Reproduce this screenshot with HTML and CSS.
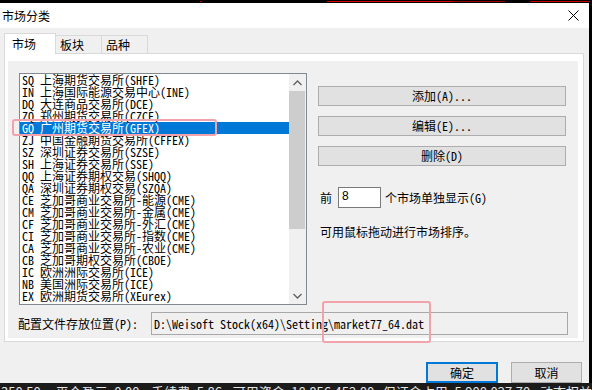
FILE: index.html
```html
<!DOCTYPE html>
<html lang="zh-CN">

<head>
    <meta charset="UTF-8">
    <title>市场分类</title>
    <link rel="stylesheet" href="styles.css">
</head>

<body>
    <div class="topstrip"><div class="redline"></div></div>
    <div class="screen">
        <div class="dialog">
            <div class="titlebar">
                <span class="title">市场分类</span>
                <svg class="close" width="11" height="11" viewBox="0 0 11 11">
                    <path d="M0.5 0.5 L10.5 10.5 M10.5 0.5 L0.5 10.5" stroke="#000" stroke-width="1" fill="none" />
                </svg>
            </div>
            <div class="dlgbody">
                <div class="tabs">
                    <div class="tab active">市场</div>
                    <div class="tab">板块</div>
                    <div class="tab">品种</div>
                </div>
                <div class="panel">
                    <div class="page">
                        <div class="main">
                            <div class="listbox">
                                <ul class="items">
                                    <li>SQ 上海期货交易所(SHFE)</li>
                                    <li>IN 上海国际能源交易中心(INE)</li>
                                    <li>DQ 大连商品交易所(DCE)</li>
                                    <li>ZQ 郑州期货交易所(CZCE)</li>
                                    <li class="selected">GQ 广州期货交易所(GFEX)</li>
                                    <li>ZJ 中国金融期货交易所(CFFEX)</li>
                                    <li>SZ 深圳证券交易所(SZSE)</li>
                                    <li>SH 上海证券交易所(SSE)</li>
                                    <li>QQ 上海证券期权交易(SHQQ)</li>
                                    <li>QA 深圳证券期权交易(SZQA)</li>
                                    <li>CE 芝加哥商业交易所-能源(CME)</li>
                                    <li>CM 芝加哥商业交易所-金属(CME)</li>
                                    <li>CF 芝加哥商业交易所-外汇(CME)</li>
                                    <li>CI 芝加哥商业交易所-指数(CME)</li>
                                    <li>CA 芝加哥商业交易所-农业(CME)</li>
                                    <li>CB 芝加哥期权交易所(CBOE)</li>
                                    <li>IC 欧洲洲际交易所(ICE)</li>
                                    <li>NB 美国洲际交易所(ICE)</li>
                                    <li>EX 欧洲期货交易所(XEurex)</li>
                                </ul>
                                <div class="vscroll">
                                    <div class="sbtn">
                                        <svg width="9" height="6" viewBox="0 0 9 6"><path d="M0.5 5 L4.5 1 L8.5 5" stroke="#606060" stroke-width="1.3" fill="none" /></svg>
                                    </div>
                                    <div class="track"><div class="thumb"></div></div>
                                    <div class="sbtn">
                                        <svg width="9" height="6" viewBox="0 0 9 6"><path d="M0.5 1 L4.5 5 L8.5 1" stroke="#606060" stroke-width="1.3" fill="none" /></svg>
                                    </div>
                                </div>
                            </div>
                            <div class="side">
                                <div class="btn">添加(A)...</div>
                                <div class="btn">编辑(E)...</div>
                                <div class="btn">删除(D)</div>
                                <div class="showrow">
                                    <span>前</span>
                                    <span class="num">8</span>
                                    <span>个市场单独显示(G)</span>
                                </div>
                                <div class="hint">可用鼠标拖动进行市场排序。</div>
                            </div>
                        </div>
                        <div class="pathrow">
                            <span class="pathlabel">配置文件存放位置(P):</span>
                            <span class="pathbox">D:\Weisoft Stock(x64)\Setting\market77_64.dat</span>
                        </div>
                    </div>
                </div>
                <div class="footer">
                    <div class="dbtn default">确定</div>
                    <div class="dbtn">取消</div>
                </div>
            </div>
        </div>
        <div class="edge"></div>
    </div>
    <div class="status">
        <span class="s1">350.50</span>
        <span class="s2">平仓盈亏: 0.00</span>
        <span class="s3">手续费: 5.86</span>
        <span class="s4">可用资金: 18,856,452.80</span>
        <span class="s5">保证金占用: 5,908,027.70</span>
        <span>动态权益</span>
    </div>

    <div class="mark mark-row"></div>
    <div class="mark mark-path"></div>
</body>

</html>
```

FILE: styles.css
```css
* {
    box-sizing: border-box;
}

body {
    margin: 0;
    width: 592px;
    height: 390px;
    overflow: hidden;
    position: relative;
    background: #000;
    font-family: "Noto Sans CJK SC", sans-serif;
    font-size: 12px;
    color: #000;
}

.topstrip {
    height: 3px;
    padding-top: 1px;
    background: #000;
}

.redline {
    height: 1px;
    background: linear-gradient(to right,
            transparent 200px, #d00000 200px, #d00000 202px, transparent 202px,
            transparent 327px, #e00000 327px, #e00000 453px, #900 453px, #900 505px, transparent 505px,
            transparent 530px, #c00 530px, #c00 590px, transparent 590px);
}

.screen {
    display: flex;
    height: 380px;
}

.dialog {
    width: 589px;
    background: #f0f0f0;
    display: flex;
    flex-direction: column;
}

.edge {
    flex: 1;
    background: #000;
}

/* title bar */
.titlebar {
    height: 25px;
    background: #fff;
    display: flex;
    align-items: center;
    justify-content: space-between;
    padding: 0 10px 0 2px;
}

.title {
    font-size: 12px;
    line-height: 14px;
}

.close {
    display: block;
}

.dlgbody {
    flex: 1;
    padding: 5px 5px 0 4px;
}

/* tabs */
.tabs {
    display: flex;
    align-items: flex-end;
    height: 20px;
}

.tab {
    width: 46px;
    height: 18px;
    border: 1px solid #d9d9d9;
    border-left: none;
    border-bottom: none;
    padding-left: 4px;
    font-size: 12px;
    line-height: 17px;
}

.tab.active {
    width: 52px;
    height: 21px;
    margin-bottom: -1px;
    border-left: 1px solid #d9d9d9;
    background: #fff;
    padding-left: 7px;
    line-height: 19px;
    position: relative;
    z-index: 1;
}

.panel {
    width: 580px;
    height: 289px;
    border: 1px solid #d9d9d9;
    background: #fff;
    padding: 7px 5px 3px 3px;
}

.page {
    height: 100%;
    background: #f0f0f0;
    font-family: "Noto Sans Mono CJK SC", "Noto Sans CJK SC", monospace;
}

.main {
    display: flex;
    padding: 12px 0 0 11px;
}

/* list box */
.listbox {
    width: 288px;
    height: 232px;
    border: 1px solid #828790;
    background: #fff;
    display: flex;
}

.items {
    flex: 1;
    list-style: none;
    margin: 0;
    padding: 0;
}

.items li {
    height: 12px;
    line-height: 12px;
    font-size: 12px;
    padding-left: 2px;
    white-space: nowrap;
}

.items li.selected {
    background: #0078d7;
    color: #fff;
}

.vscroll {
    width: 17px;
    background: #f0f0f0;
    display: flex;
    flex-direction: column;
}

.sbtn {
    height: 17px;
    display: flex;
    align-items: center;
    justify-content: center;
}

.track {
    flex: 1;
}

.thumb {
    height: 138px;
    margin-right: 1px;
    background: #cdcdcd;
}

/* right column */
.side {
    width: 248px;
    margin-left: 11px;
    padding-top: 13px;
}

.btn {
    height: 20px;
    margin-bottom: 10px;
    background: #e1e1e1;
    border: 1px solid #adadad;
    text-align: center;
    line-height: 18px;
}

.showrow {
    display: flex;
    align-items: center;
    height: 21px;
    margin-top: 21px;
    padding-left: 2px;
}

.num {
    width: 43px;
    height: 21px;
    margin: 0 4px 0 6px;
    background: #fff;
    border: 1px solid #7a7a7a;
    padding: 1px 0 0 3px;
    font-family: "Liberation Sans", sans-serif;
    font-size: 12px;
    line-height: 14px;
}

.hint {
    margin-top: 18px;
    padding-left: 2px;
    line-height: 12px;
}

/* path row */
.pathrow {
    display: flex;
    align-items: center;
    margin-top: 7px;
    padding-left: 10px;
}

.pathlabel {
    width: 133px;
    line-height: 12px;
}

.pathbox {
    width: 417px;
    height: 23px;
    border: 1px solid #a8a8a8;
    background: #f0f0f0;
    padding-left: 2px;
    line-height: 21px;
    white-space: nowrap;
}

/* dialog buttons */
.footer {
    display: flex;
    justify-content: flex-end;
    gap: 13px;
    margin-top: 20px;
    padding-right: 2px;
}

.dbtn {
    width: 71px;
    height: 21px;
    background: #e1e1e1;
    border: 1px solid #adadad;
    text-align: center;
    line-height: 19px;
    font-size: 12px;
}

.dbtn.default {
    width: 72px;
    border: 2px solid #0078d7;
    line-height: 17px;
}

/* status bar of the app behind */
.status {
    height: 7px;
    background: #1b1b1b;
    color: #e6e6e6;
    display: flex;
    font-size: 13px;
    line-height: 13px;
    padding-top: 2px;
    padding-left: 1px;
    white-space: nowrap;
    overflow: hidden;
}

.s1 { width: 55px; }
.s2 { width: 96px; }
.s3 { width: 82px; }
.s4 { width: 151px; }
.s5 { width: 158px; }

/* red annotation boxes drawn over the screenshot */
.mark {
    position: absolute;
    border: 2px solid #f2a2aa;
    border-radius: 3px;
}

.mark-row {
    left: 12px;
    top: 119px;
    width: 205px;
    height: 17px;
}

.mark-path {
    left: 322px;
    top: 301px;
    width: 109px;
    height: 42px;
}
```
